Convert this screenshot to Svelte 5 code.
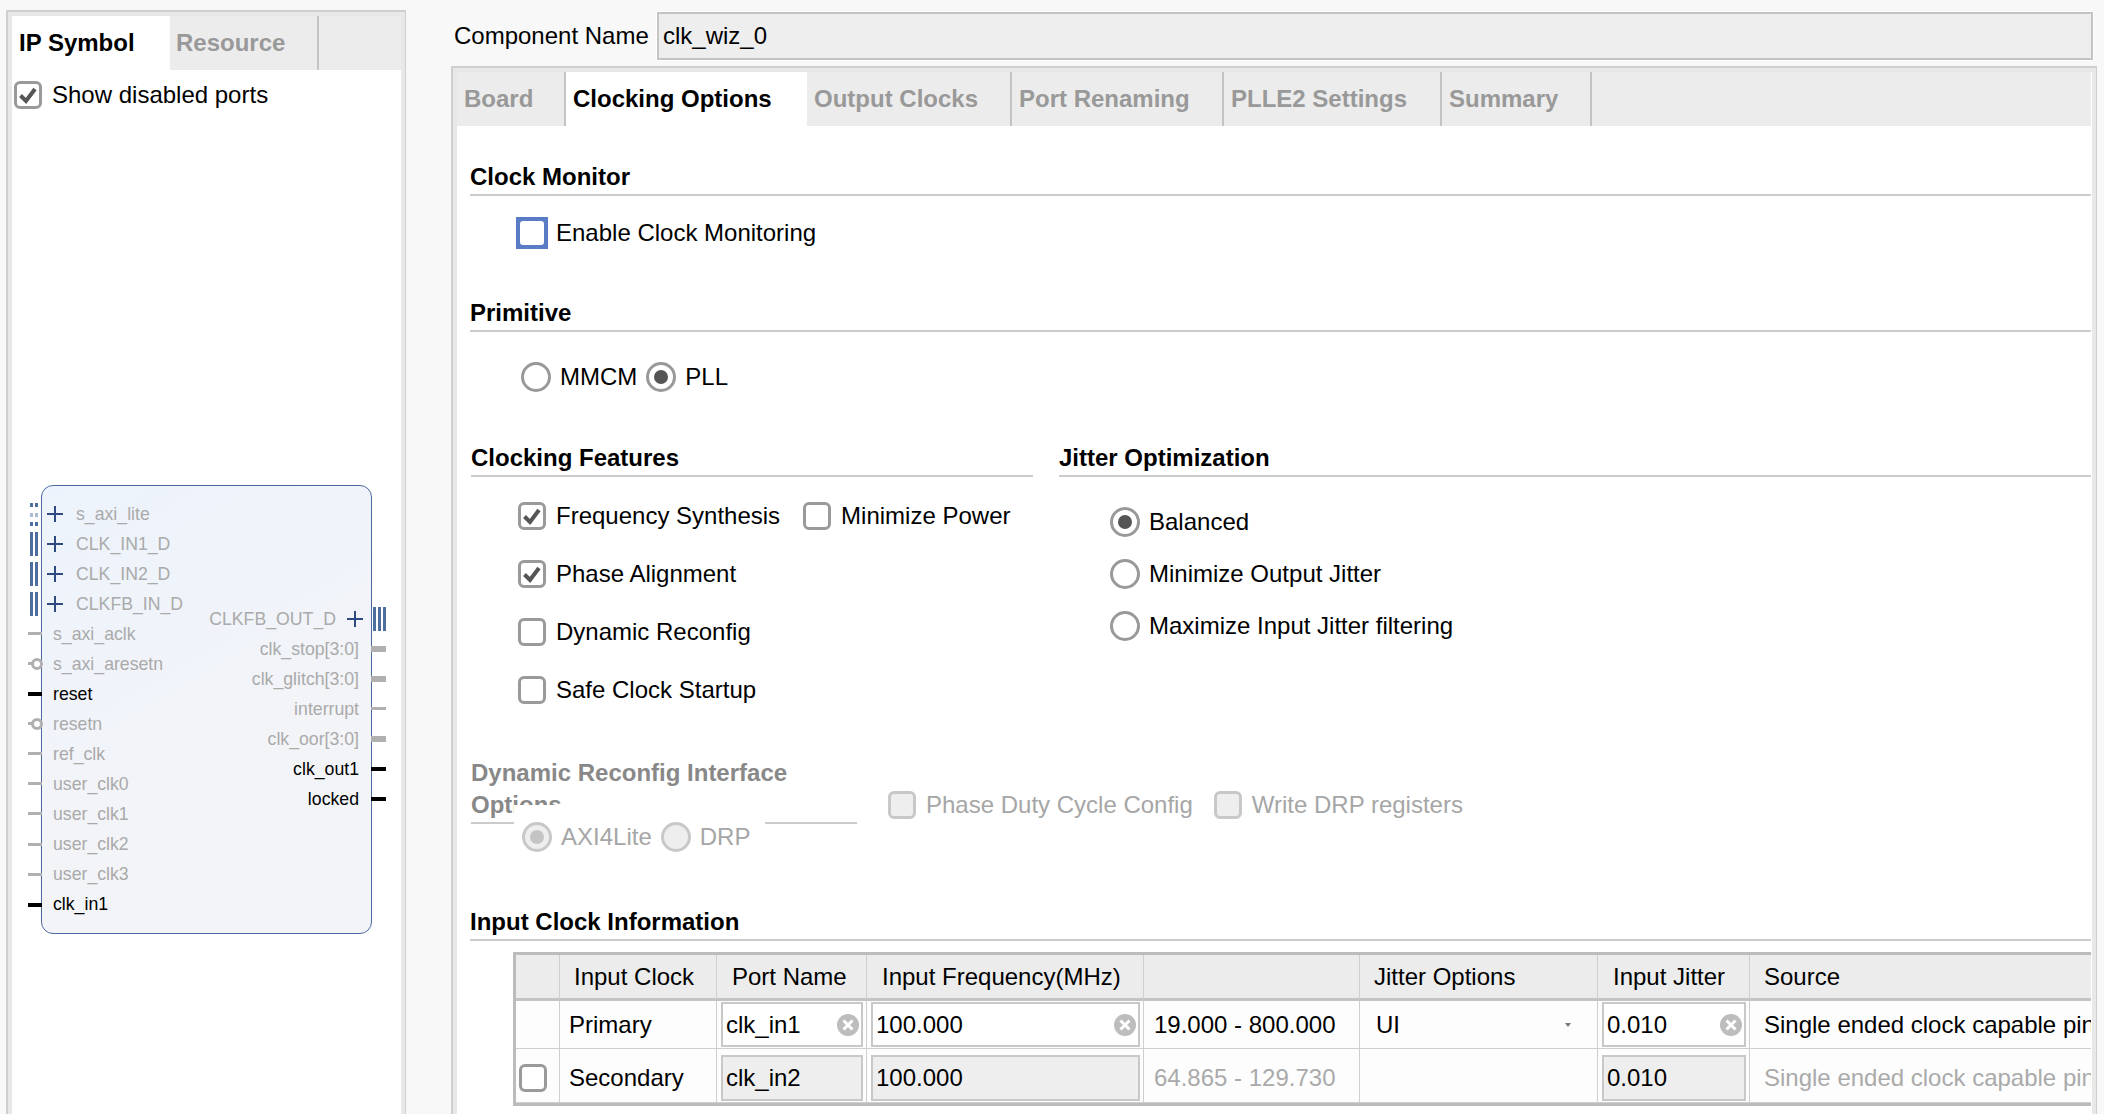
<script lang="ts">
  // Clocking Wizard customization dialog
  const leftPorts = [
    { name: "s_axi_lite", kind: "dotted" },
    { name: "CLK_IN1_D", kind: "bus" },
    { name: "CLK_IN2_D", kind: "bus" },
    { name: "CLKFB_IN_D", kind: "bus" },
    { name: "s_axi_aclk", kind: "off" },
    { name: "s_axi_aresetn", kind: "inv" },
    { name: "reset", kind: "on" },
    { name: "resetn", kind: "inv" },
    { name: "ref_clk", kind: "off" },
    { name: "user_clk0", kind: "off" },
    { name: "user_clk1", kind: "off" },
    { name: "user_clk2", kind: "off" },
    { name: "user_clk3", kind: "off" },
    { name: "clk_in1", kind: "on" },
  ];

  const rightPorts = [
    { name: "clk_stop[3:0]", kind: "thick" },
    { name: "clk_glitch[3:0]", kind: "thick" },
    { name: "interrupt", kind: "off" },
    { name: "clk_oor[3:0]", kind: "thick" },
    { name: "clk_out1", kind: "on" },
    { name: "locked", kind: "on" },
  ];

  const tabs = [
    { label: "Board", width: 109 },
    { label: "Clocking Options", width: 241, active: true },
    { label: "Output Clocks", width: 205 },
    { label: "Port Renaming", width: 212 },
    { label: "PLLE2 Settings", width: 218 },
    { label: "Summary", width: 150 },
  ];
</script>

{#snippet check(on: boolean, label: string, muted = false)}
  <div class="opt" class:muted>
    <span class="box">
      {#if on}
        <svg width="22" height="22" viewBox="0 0 22 22"><path d="M3.5 11.5 9 17 18 5" fill="none" stroke="#555" stroke-width="4" /></svg>
      {/if}
    </span>
    <span>{label}</span>
  </div>
{/snippet}

{#snippet radio(on: boolean, label: string, muted = false)}
  <div class="opt radio-opt" class:muted>
    <span class="circle">{#if on}<i></i>{/if}</span>
    <span>{label}</span>
  </div>
{/snippet}

{#snippet clear()}
  <svg class="clear" width="22" height="22" viewBox="0 0 22 22">
    <circle cx="11" cy="11" r="11" fill="#bdbdbd" />
    <path d="M6.5 6.5 15.5 15.5M15.5 6.5 6.5 15.5" stroke="#fff" stroke-width="3" />
  </svg>
{/snippet}

<div class="page">
  <aside class="left">
    <div class="tabbar small">
      <div class="tab active first">IP Symbol</div>
      <div class="tab res">Resource</div>
    </div>
    <div class="show">{@render check(true, "Show disabled ports")}</div>

    <div class="block">
      <div class="col">
        {#each leftPorts as p}
          <div class="port {p.kind}">
            {#if p.kind === "bus" || p.kind === "dotted"}
              <span class="bars {p.kind}"></span>
              <span class="plus"></span>
            {:else}
              <span class="stub"></span>
              {#if p.kind === "inv"}<span class="bubble"></span>{/if}
            {/if}
            <span class="pname">{p.name}</span>
          </div>
        {/each}
      </div>
      <div class="col right">
        <div class="port bus out">
          <span class="pname">CLKFB_OUT_D</span>
          <span class="plus"></span>
          <span class="bars three"></span>
        </div>
        {#each rightPorts as p}
          <div class="port {p.kind} out">
            <span class="pname">{p.name}</span>
            <span class="stub"></span>
          </div>
        {/each}
      </div>
    </div>
  </aside>

  <main class="main">
    <div class="name-row">
      <span class="name-label">Component Name</span>
      <div class="name-input">clk_wiz_0</div>
    </div>

    <div class="panel">
      <div class="tabbar">
        {#each tabs as t}
          <div class="tab sep" class:active={t.active} style="width: {t.width}px">{t.label}</div>
        {/each}
      </div>

      <div class="body">
        <h3 class="head first-head">Clock Monitor</h3>
        <div class="row monitor">
          <span class="focus"><span></span></span>
          <span>Enable Clock Monitoring</span>
        </div>

        <h3 class="head primitive">Primitive</h3>
        <div class="row radios">
          {@render radio(false, "MMCM")}
          {@render radio(true, "PLL")}
        </div>

        <div class="two">
          <div class="features">
            <h3 class="head">Clocking Features</h3>
            <div class="feat-list">
              <div class="feat-row">
                {@render check(true, "Frequency Synthesis")}
                {@render check(false, "Minimize Power")}
              </div>
              {@render check(true, "Phase Alignment")}
              {@render check(false, "Dynamic Reconfig")}
              {@render check(false, "Safe Clock Startup")}
            </div>
          </div>
          <div class="jitter">
            <h3 class="head">Jitter Optimization</h3>
            <div class="jitter-list">
              {@render radio(true, "Balanced")}
              {@render radio(false, "Minimize Output Jitter")}
              {@render radio(false, "Maximize Input Jitter filtering")}
            </div>
          </div>
        </div>

        <div class="reconfig">
          <div class="reconfig-group">
            <h3 class="head muted-head">Dynamic Reconfig Interface Options</h3>
            <div class="reconfig-radios">
              {@render radio(true, "AXI4Lite", true)}
              {@render radio(false, "DRP", true)}
            </div>
          </div>
          <div class="reconfig-checks">
            {@render check(false, "Phase Duty Cycle Config", true)}
            {@render check(false, "Write DRP registers", true)}
          </div>
        </div>

        <h3 class="head input-head">Input Clock Information</h3>

        <div class="table">
          <div class="cell th"></div>
          <div class="cell th pad-clock">Input Clock</div>
          <div class="cell th pad-port">Port Name</div>
          <div class="cell th pad-freq">Input Frequency(MHz)</div>
          <div class="cell th"></div>
          <div class="cell th pad-opts">Jitter Options</div>
          <div class="cell th pad-ij">Input Jitter</div>
          <div class="cell th pad-src last">Source</div>

          <div class="cell"></div>
          <div class="cell pad-label">Primary</div>
          <div class="cell in"><div class="field">clk_in1{@render clear()}</div></div>
          <div class="cell in"><div class="field">100.000{@render clear()}</div></div>
          <div class="cell pad-range">19.000 - 800.000</div>
          <div class="cell pad-ui">UI<span class="caret"></span></div>
          <div class="cell in"><div class="field">0.010{@render clear()}</div></div>
          <div class="cell pad-src last">Single ended clock capable pin</div>

          <div class="cell low chk"><span class="box"></span></div>
          <div class="cell low pad-label">Secondary</div>
          <div class="cell low in"><div class="field off">clk_in2</div></div>
          <div class="cell low in"><div class="field off">100.000</div></div>
          <div class="cell low pad-range dim">64.865 - 129.730</div>
          <div class="cell low"></div>
          <div class="cell low in"><div class="field off">0.010</div></div>
          <div class="cell low pad-src last dim">Single ended clock capable pin</div>
        </div>
      </div>
    </div>
  </main>
</div>

<style>
  :global(body) {
    margin: 0;
    background: #f8f8f8;
  }

  .page {
    display: flex;
    height: 1114px;
    overflow: hidden;
    font-family: "Liberation Sans", Arial, sans-serif;
    font-size: 24px;
    color: #000;
    background: #f8f8f8;
  }

  /* left panel */
  .left {
    flex: none;
    width: 389px;
    height: 1200px;
    margin: 10px 0 0 6px;
    background: #fff;
    border: 2px solid #cfcfcf;
    border-width: 2px 1px 0 2px;
    box-sizing: content-box;
    box-shadow: inset 4px 4px 0 #e8e8e8, inset -4px 0 0 #e8e8e8;
    padding: 4px 4px 0 4px;
  }

  .tabbar {
    display: flex;
    height: 54px;
    background: #ececec;
  }

  .tab {
    box-sizing: border-box;
    display: flex;
    align-items: center;
    padding-left: 7px;
    font-weight: bold;
    color: #999;
    position: relative;
  }

  .tab.first {
    width: 158px;
    padding-left: 7px;
  }

  .tab.res {
    width: 149px;
    padding-left: 6px;
    border-right: 2px solid #c4c4c4;
  }

  .tab.sep {
    border-right: 2px solid #c4c4c4;
  }

  .tab.active {
    background: #fff;
    color: #000;
    border-right: 0;
  }

  .show {
    padding: 9px 0 0 2px;
  }

  .opt {
    display: flex;
    align-items: center;
    gap: 10px;
    height: 32px;
    white-space: nowrap;
  }

  .opt.muted {
    color: #a6a6a6;
  }

  .box {
    flex: none;
    box-sizing: border-box;
    display: flex;
    align-items: center;
    justify-content: center;
    width: 28px;
    height: 28px;
    background: #fff;
    border: 3px solid #9a9a9a;
    border-radius: 6px;
  }

  .muted .box {
    background: #eeeeee;
    border-color: #c8c8c8;
  }

  .circle {
    flex: none;
    box-sizing: border-box;
    display: flex;
    align-items: center;
    justify-content: center;
    width: 30px;
    height: 30px;
    background: #fff;
    border: 3px solid #999;
    border-radius: 50%;
  }

  .circle i {
    width: 14px;
    height: 14px;
    border-radius: 50%;
    background: #555;
  }

  .muted .circle {
    background: #eeeeee;
    border: 3px solid #c8c8c8;
  }

  .muted .circle i {
    background: #c4c4c4;
  }

  /* IP symbol */
  .block {
    box-sizing: border-box;
    display: flex;
    justify-content: space-between;
    width: 331px;
    height: 449px;
    margin: 374px 0 0 29px;
    padding: 13px 12px 0 0;
    background: linear-gradient(150deg, #edf3fc, #f3f4f7 70%);
    border: 1.5px solid #4d6aa0;
    border-radius: 12px;
    font-size: 17.7px;
    color: #aaa;
  }

  .col {
    display: flex;
    flex-direction: column;
  }

  .col.right {
    align-items: flex-end;
    padding-top: 105px;
  }

  .port {
    position: relative;
    display: flex;
    align-items: center;
    height: 30.05px;
    padding-left: 11px;
    white-space: nowrap;
  }

  .port.bus,
  .port.dotted {
    padding-left: 34px;
  }

  .port.out {
    padding: 0;
  }

  .port.on {
    color: #000;
  }

  .stub {
    position: absolute;
    left: -14px;
    top: 13px;
    width: 14px;
    height: 3px;
    background: #b0b0b0;
  }

  .on .stub {
    height: 4px;
    background: #000;
  }

  .out .stub {
    left: auto;
    right: -27px;
    width: 15px;
  }

  .thick .stub {
    height: 6px;
    top: 12px;
  }

  .bubble {
    position: absolute;
    left: -11px;
    top: 9px;
    box-sizing: border-box;
    width: 12px;
    height: 12px;
    background: #fff;
    border: 3px solid #b0b0b0;
    border-radius: 50%;
  }

  .bars {
    position: absolute;
    left: -12px;
    top: 3px;
    width: 3px;
    height: 24px;
    background: #4d6f9f;
    box-shadow: 5px 0 0 #4d6f9f;
  }

  .bars.dotted {
    height: 4px;
    top: 4px;
    box-shadow:
      5px 0 0 #4d6f9f,
      0 10px 0 #a8bbd3,
      5px 10px 0 #a8bbd3,
      0 19px 0 #4d6f9f,
      5px 19px 0 #4d6f9f;
  }

  .bars.three {
    left: auto;
    right: -27px;
    box-shadow:
      -5px 0 0 #4d6f9f,
      -10px 0 0 #4d6f9f;
  }

  .plus {
    position: absolute;
    left: 5px;
    top: 7px;
    width: 16px;
    height: 16px;
    background:
      linear-gradient(#2f4a80, #2f4a80) center / 16px 2px no-repeat,
      linear-gradient(#2f4a80, #2f4a80) center / 2px 16px no-repeat;
  }

  .out .plus {
    left: auto;
    right: -4px;
  }

  .port.bus.out {
    padding-right: 23px;
  }

  /* right side */
  .main {
    flex: 1;
    min-width: 0;
    display: flex;
    flex-direction: column;
    margin-left: 45px;
    padding-right: 7px;
  }

  .name-row {
    display: flex;
    align-items: center;
    height: 48px;
    margin-top: 12px;
    padding: 0 4px 0 3px;
  }

  .name-label {
    width: 203px;
    flex: none;
  }

  .name-input {
    flex: 1;
    box-sizing: border-box;
    height: 48px;
    padding-left: 4px;
    line-height: 44px;
    background: #eeeeee;
    border: 2px solid #c4c4c4;
    box-shadow: 0 0 0 1px #fff;
  }

  .panel {
    flex: 1;
    min-width: 0;
    margin-top: 6px;
    background: #fff;
    border: 2px solid #cfcfcf;
    border-width: 2px 1px 0 2px;
    box-shadow: inset 4px 4px 0 #e8e8e8, inset -4px 0 0 #e8e8e8;
    padding: 4px 5px 0 4px;
  }

  .body {
    padding: 0 0 0 13px;
  }

  .head {
    box-sizing: border-box;
    margin: 0;
    height: 37px;
    line-height: 35px;
    font-size: 24px;
    font-weight: bold;
    border-bottom: 2px solid #cccccc;
  }

  .first-head {
    margin-top: 33px;
  }

  .row {
    display: flex;
    align-items: center;
  }

  .monitor {
    gap: 8px;
    height: 32px;
    margin-top: 21px;
    padding-left: 46px;
  }

  .focus {
    box-sizing: border-box;
    width: 32px;
    height: 32px;
    background: #5a7bc6;
    padding: 4px;
  }

  .focus span {
    display: block;
    width: 24px;
    height: 24px;
    background: #fff;
    border-radius: 3px;
  }

  .primitive {
    margin-top: 46px;
  }

  .radios {
    gap: 9px;
    margin-top: 29px;
    padding-left: 51px;
  }

  .radio-opt {
    gap: 9px;
  }

  .two {
    display: flex;
    margin-top: 47px;
  }

  .features {
    flex: none;
    width: 562px;
    margin-left: 1px;
  }

  .jitter {
    flex: 1;
    margin-left: 26px;
  }

  .feat-list {
    display: flex;
    flex-direction: column;
    gap: 26px;
    margin-top: 23px;
    padding-left: 47px;
  }

  .feat-row {
    display: flex;
    gap: 23px;
  }

  .jitter-list {
    display: flex;
    flex-direction: column;
    gap: 20px;
    margin-top: 29px;
    padding-left: 51px;
  }

  .reconfig {
    display: flex;
    margin-top: 51px;
  }

  .reconfig-group {
    position: relative;
    flex: none;
    width: 386px;
    margin-left: 1px;
  }

  .muted-head {
    width: 386px;
    height: 67px;
    line-height: 32px;
    color: #888;
  }

  .reconfig-radios {
    position: absolute;
    left: 43px;
    top: 48px;
    display: flex;
    gap: 9px;
    width: 251px;
    height: 60px;
    padding: 16px 0 0 8px;
    box-sizing: border-box;
    background: #fff;
  }

  .reconfig-checks {
    display: flex;
    gap: 21px;
    margin: 32px 0 0 31px;
  }

  .input-head {
    margin-top: 80px;
  }

  /* table */
  .table {
    display: grid;
    grid-template-columns: 44px 157px 150px 277px 216px 238px 152px 1fr;
    grid-template-rows: 46px 48px 54px;
    margin: 11px 0 0 43px;
    border: solid #bcbcbc;
    border-width: 3px 0 3px 3px;
    white-space: nowrap;
    overflow: hidden;
  }

  .cell {
    box-sizing: border-box;
    display: flex;
    align-items: center;
    position: relative;
    min-width: 0;
    overflow: hidden;
    border-right: 1px solid #cfcfcf;
    border-bottom: 1px solid #cfcfcf;
    background: #fdfdfd;
  }

  .th {
    background: #ececec;
    border-bottom: 3px solid #c4c4c4;
  }

  .last {
    border-right: 0;
  }

  .low {
    padding-top: 4px;
  }

  .pad-clock { padding-left: 14px; }
  .pad-port { padding-left: 15px; }
  .pad-freq { padding-left: 15px; }
  .pad-opts { padding-left: 14px; }
  .pad-ij { padding-left: 15px; }
  .pad-src { padding-left: 14px; }
  .pad-label { padding-left: 9px; }
  .pad-range { padding-left: 10px; }
  .pad-ui { padding-left: 16px; }

  .dim {
    color: #aaaaaa;
  }

  .in {
    padding-left: 4px;
    padding-right: 3px;
  }

  .field {
    box-sizing: border-box;
    flex: 1;
    display: flex;
    align-items: center;
    justify-content: space-between;
    height: 45px;
    padding: 0 2px 0 3px;
    background: #fff;
    border: 2px solid #c8c8c8;
  }

  .field.off {
    height: 46px;
    background: #eeeeee;
  }

  .caret {
    position: absolute;
    right: 26px;
    top: 22px;
    width: 0;
    height: 0;
    border: 3px solid transparent;
    border-top: 4px solid #777;
  }

  .chk {
    padding-left: 3px;
  }
</style>
